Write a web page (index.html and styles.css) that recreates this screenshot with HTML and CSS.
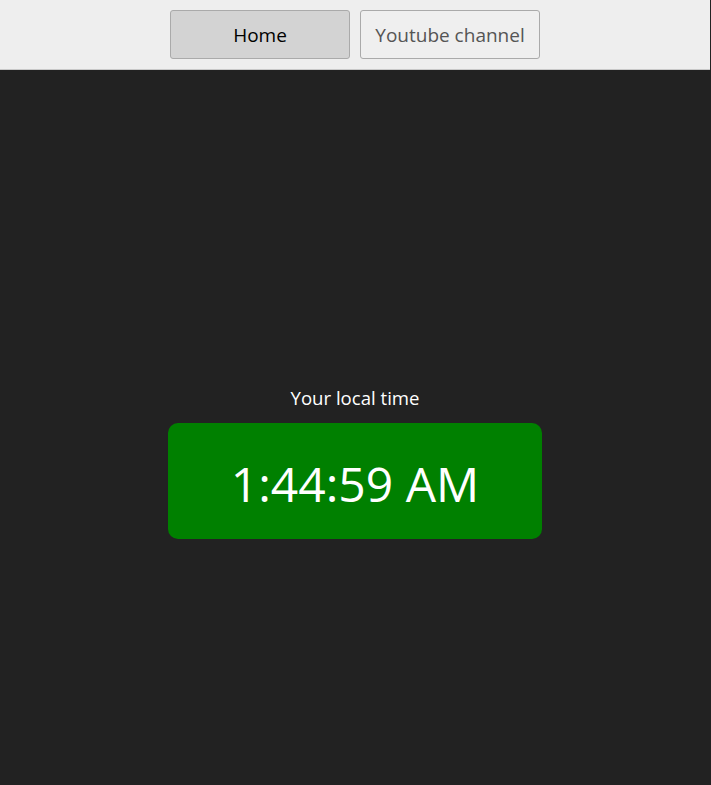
FILE: index.html
```html
<!DOCTYPE html>
<html lang="en">
<head>
<meta charset="utf-8">
<title>Local time</title>
<link rel="stylesheet" href="styles.css">
</head>
<body>
<header class="topbar">
  <nav class="nav">
    <button class="nav-btn nav-btn--active">Home</button>
    <button class="nav-btn">Youtube channel</button>
  </nav>
</header>
<main class="stage">
  <div class="clock">
    <p class="clock-label">Your local time</p>
    <div class="clock-face">1:44:59 AM</div>
  </div>
</main>
</body>
</html>
```
FILE: styles.css
```css
* { box-sizing: border-box; }
html, body { margin: 0; height: 100%; }
html { background: #222222; }
body {
  font-family: "Open Sans", "Noto Sans", sans-serif;
  background: #222222;
  display: flex;
  flex-direction: column;
  padding-right: 1px;
}
.topbar {
  background: #eeeeee;
  height: 70px;
  border-bottom: 1px solid #c8c8c8;
  flex: none;
}
.nav {
  display: flex;
  justify-content: center;
  gap: 10px;
  padding-top: 10px;
}
.nav-btn {
  width: 180px;
  height: 49px;
  font-family: inherit;
  font-size: 19px;
  color: #555555;
  background: #efefef;
  border: 1px solid #aaaaaa;
  border-radius: 3px;
  padding: 0;
}
.nav-btn--active {
  background: #d3d3d3;
  color: #000000;
}
.stage {
  flex: 1;
  background: #222222;
  display: flex;
  justify-content: center;
  padding-top: 315px;
}
.clock {
  display: flex;
  flex-direction: column;
  align-items: center;
}
.clock-label {
  margin: 0 0 12px;
  color: #ffffff;
  font-size: 18.6px;
  line-height: 26px;
}
.clock-face {
  width: 374px;
  height: 116px;
  background: #008000;
  border-radius: 10px;
  color: #ffffff;
  font-size: 48px;
  padding-top: 4px;
  display: flex;
  align-items: center;
  justify-content: center;
}
```
